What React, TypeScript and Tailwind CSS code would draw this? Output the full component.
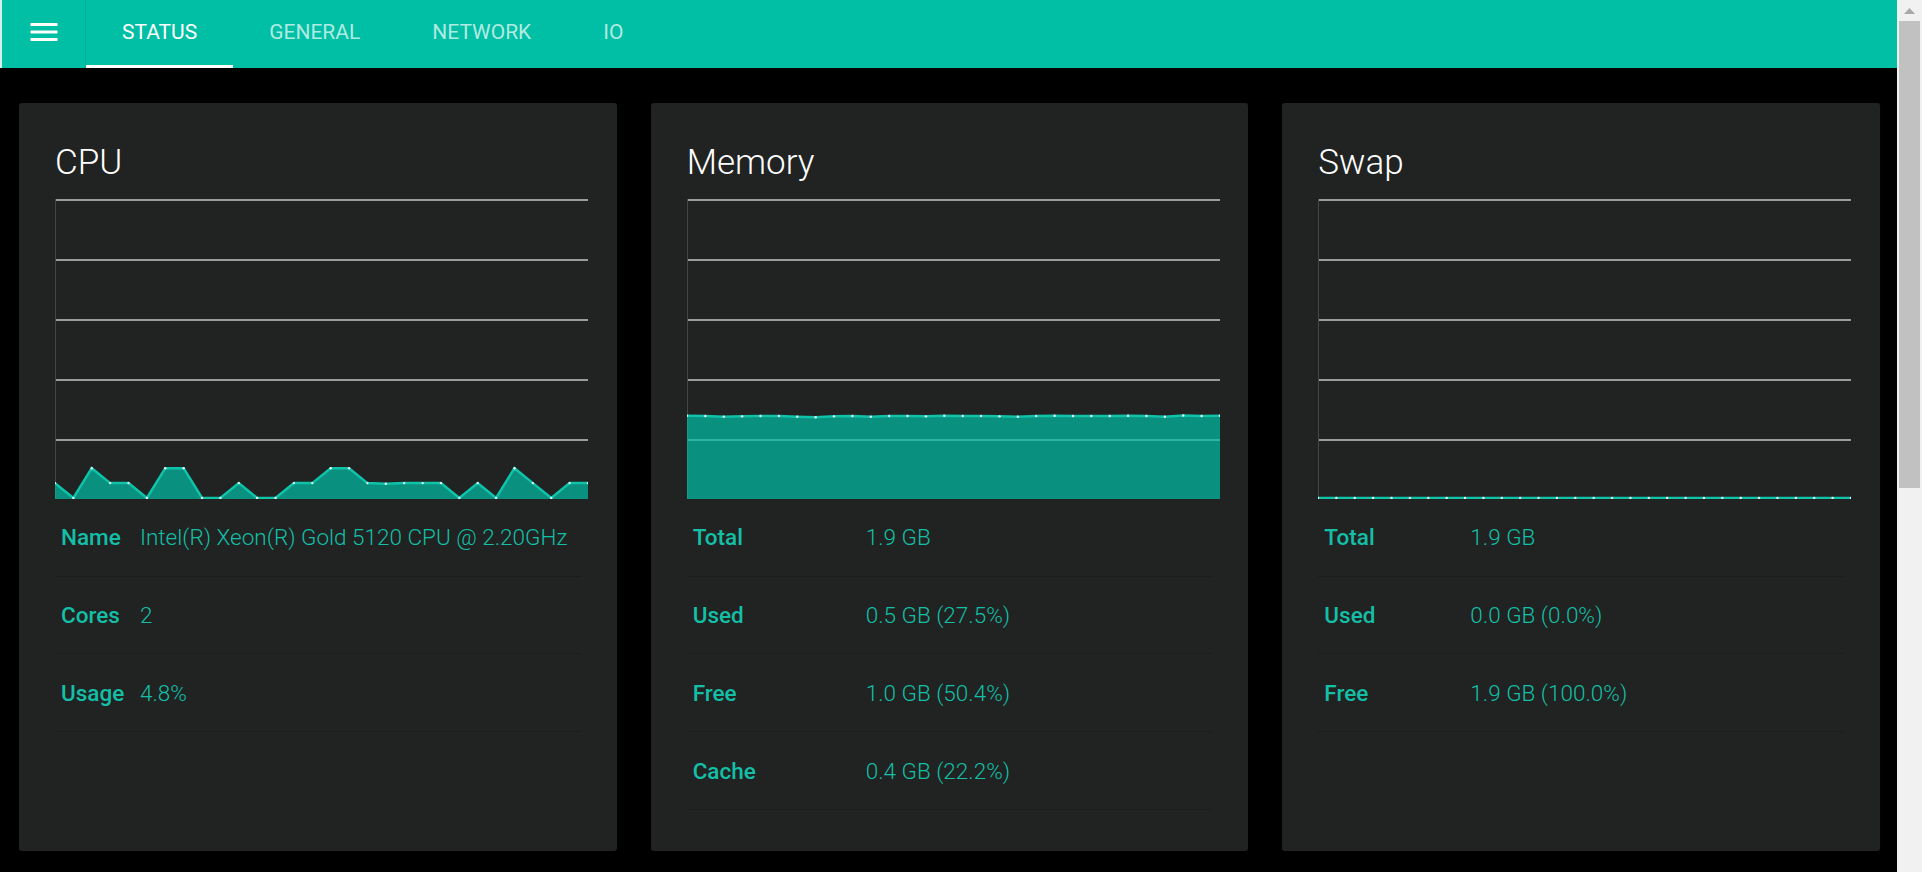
import React from "react";

const W = 533;
const H = 300;

const cpuData = [5, 0, 10, 5, 5, 0, 10, 10, 0, 0, 5, 0, 0, 5, 5, 10, 10, 5, 4.8, 5, 5, 5, 0, 5, 0, 10, 5, 0, 5, 5];
const memData = [27.6, 27.5, 27.3, 27.4, 27.5, 27.5, 27.3, 27.1, 27.4, 27.5, 27.3, 27.5, 27.5, 27.4, 27.6, 27.5, 27.5, 27.4, 27.3, 27.5, 27.6, 27.5, 27.5, 27.5, 27.6, 27.5, 27.3, 27.7, 27.5, 27.6];
const swapData = Array.from({ length: 30 }, () => 0);

function Chart({ data }: { data: number[] }) {
  const n = data.length;
  const pts = data.map((v, i) => [(i * W) / (n - 1), 299 - v * 2.98] as const);
  const line = pts.map((p, i) => `${i === 0 ? "M" : "L"}${p[0].toFixed(2)} ${p[1].toFixed(2)}`).join(" ");
  const area = `${line} L${W} ${H} L0 ${H} Z`;
  const grid = [1, 61, 121, 181, 241];
  return (
    <svg width={W} height={H} viewBox={`0 0 ${W} ${H}`} className="block">
      {grid.map((y) => (
        <line key={y} x1={1} x2={W} y1={y} y2={y} stroke="#c4c4c4" strokeWidth={1.5} />
      ))}
      <line x1={0.5} x2={0.5} y1={0} y2={H} stroke="#444645" strokeWidth={1} />
      <path d={area} fill="rgba(0,191,165,0.7)" />
      <path d={line} fill="none" stroke="#0ec3a9" strokeWidth={2.5} strokeLinejoin="miter" />
      {pts.map((p, i) => (
        <circle key={i} cx={p[0]} cy={p[1]} r={1.2} fill="#e6fbf7" />
      ))}
    </svg>
  );
}

type Row = [string, string];

function Card({
  title,
  data,
  rows,
  labelW,
}: {
  title: string;
  data: number[];
  rows: Row[];
  labelW: string;
}) {
  return (
    <div className="flex-1 min-w-0 bg-[#212322] rounded-[3px] px-[36px] pt-[40px] pb-[41px]">
      <div className="text-[35px] leading-[40px] font-light text-white">{title}</div>
      <div className="mt-[16px] w-[533px]">
        <Chart data={data} />
      </div>
      <div>
        {rows.map(([k, v]) => (
          <div key={k} className="flex items-center pt-[2px] h-[77.7px] border-b border-[#1b1d1c] text-[22.5px] text-[#13bfa6]">
            <div className={`${labelW} shrink-0 pl-[6px] font-medium`}>{k}</div>
            <div className="font-light whitespace-nowrap">{v}</div>
          </div>
        ))}
      </div>
    </div>
  );
}

export default function App() {
  const tabs = ["STATUS", "GENERAL", "NETWORK", "IO"];
  return (
    <div className="flex h-[872px] w-full overflow-hidden bg-black font-['Roboto',sans-serif]">
      <div className="flex-1 min-w-0 flex flex-col">
        <div className="h-[68px] shrink-0 bg-[#00bfa5] flex items-stretch border-l-2 border-[#d5efeb]">
          <div className="w-[84px] flex items-center justify-center pb-[4px] border-r border-black/10">
            <svg width="36" height="36" viewBox="0 0 24 24" fill="white">
              <path d="M3 18h18v-2H3v2zm0-5h18v-2H3v2zm0-7v2h18V6H3z" />
            </svg>
          </div>
          {tabs.map((t, i) => (
            <div
              key={t}
              className={
                i === 0
                  ? "px-[36px] flex items-center text-[21px] text-white border-b-[3px] border-white"
                  : "px-[36px] flex items-center text-[21px] text-white/70 border-b-[3px] border-transparent"
              }
            >
              {t}
            </div>
          ))}
        </div>
        <div className="flex items-stretch gap-[34px] pl-[19px] pr-[17px] pt-[35px]">
          <Card
            title="CPU"
            data={cpuData}
            labelW="w-[85px]"
            rows={[
              ["Name", "Intel(R) Xeon(R) Gold 5120 CPU @ 2.20GHz"],
              ["Cores", "2"],
              ["Usage", "4.8%"],
            ]}
          />
          <Card
            title="Memory"
            data={memData}
            labelW="w-[179px]"
            rows={[
              ["Total", "1.9 GB"],
              ["Used", "0.5 GB (27.5%)"],
              ["Free", "1.0 GB (50.4%)"],
              ["Cache", "0.4 GB (22.2%)"],
            ]}
          />
          <Card
            title="Swap"
            data={swapData}
            labelW="w-[152px]"
            rows={[
              ["Total", "1.9 GB"],
              ["Used", "0.0 GB (0.0%)"],
              ["Free", "1.9 GB (100.0%)"],
            ]}
          />
        </div>
      </div>
      <div className="w-[25px] shrink-0 bg-[#f1f1f1] flex flex-col items-center">
        <div className="h-[21px] w-full flex items-center justify-center">
          <svg width="11" height="6" viewBox="0 0 11 6">
            <path d="M5.5 0 L11 6 L0 6 Z" fill="#a8a8a8" />
          </svg>
        </div>
        <div className="w-[21px] h-[467px] bg-[#c1c1c1]" />
      </div>
    </div>
  );
}
